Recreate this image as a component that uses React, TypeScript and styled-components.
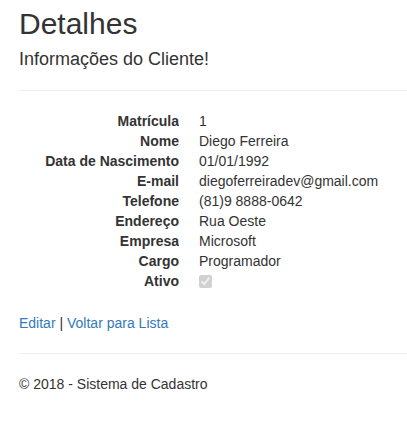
import React from 'react';
import styled, { createGlobalStyle } from 'styled-components';

const GlobalStyle = createGlobalStyle`
  html, body {
    margin: 0;
    padding: 0;
    background: #fff;
  }
  body {
    font-family: "Liberation Sans", Arial, Helvetica, sans-serif;
    font-size: 14px;
    line-height: 1.42857143;
    color: #333;
  }
  * {
    box-sizing: border-box;
  }
`;

const Page = styled.div`
  padding: 7px 0 0 19px;
`;

const Title = styled.h2`
  font-size: 30px;
  font-weight: 500;
  line-height: 1.1;
  margin: 0 0 10px;
`;

const Subtitle = styled.h4`
  font-size: 18px;
  font-weight: 500;
  line-height: 1.1;
  margin: 10px 0 10px;
`;

const Rule = styled.hr`
  margin: 20px 0;
  border: 0;
  border-top: 1px solid #eee;
  height: 0;
`;

const DetailList = styled.dl`
  display: grid;
  grid-template-columns: 160px 1fr;
  column-gap: 20px;
  margin: 0 0 20px;
`;

const Term = styled.dt`
  font-weight: 700;
  text-align: right;
  white-space: nowrap;
  overflow: hidden;
  text-overflow: ellipsis;
`;

const Value = styled.dd`
  margin: 0;
`;

const Check = styled.input`
  margin: 4px 0 0;
  line-height: normal;
  width: 13px;
  height: 13px;
`;

const Actions = styled.p`
  margin: 0 0 10px;
`;

const Link = styled.a`
  color: #337ab7;
  text-decoration: none;
`;

const Footer = styled.footer`
  & p {
    margin: 0 0 10px;
  }
`;

const fields: [string, string][] = [
  ['Matrícula', '1'],
  ['Nome', 'Diego Ferreira'],
  ['Data de Nascimento', '01/01/1992'],
  ['E-mail', 'diegoferreiradev@gmail.com'],
  ['Telefone', '(81)9 8888-0642'],
  ['Endereço', 'Rua Oeste'],
  ['Empresa', 'Microsoft'],
  ['Cargo', 'Programador'],
];

const App = () => {
  return (
    <Page>
      <GlobalStyle />
      <Title>Detalhes</Title>
      <Subtitle>Informações do Cliente!</Subtitle>
      <Rule />
      <DetailList>
        {fields.map(([label, value]) => (
          <React.Fragment key={label}>
            <Term>{label}</Term>
            <Value>{value}</Value>
          </React.Fragment>
        ))}
        <Term>Ativo</Term>
        <Value>
          <Check type="checkbox" checked disabled readOnly />
        </Value>
      </DetailList>
      <Actions>
        <Link href="#">Editar</Link> | <Link href="#">Voltar para Lista</Link>
      </Actions>
      <Rule />
      <Footer>
        <p>&copy; 2018 - Sistema de Cadastro</p>
      </Footer>
    </Page>
  );
};

export default App;
